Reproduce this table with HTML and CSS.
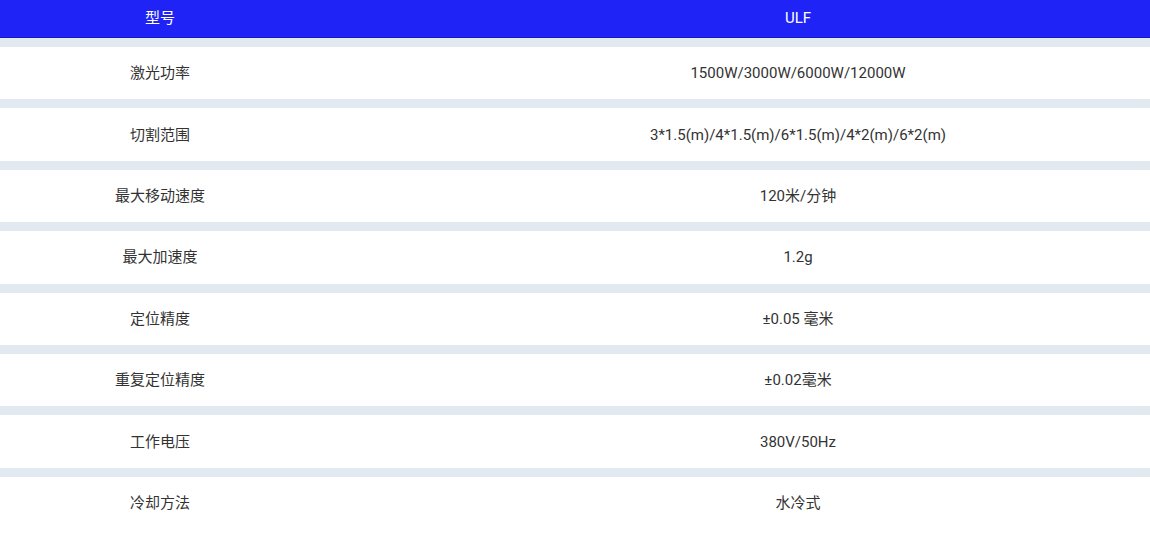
FILE: index.html
```html
<!DOCTYPE html>
<html lang="zh">
<head>
<meta charset="utf-8">
<link rel="stylesheet" href="styles.css">
</head>
<body>
<div class="spec">
  <div class="row head">
    <div class="c1">型号</div>
    <div class="c2">ULF</div>
  </div>
  <div class="row"><div class="c1">激光功率</div><div class="c2">1500W/3000W/6000W/12000W</div></div>
  <div class="row"><div class="c1">切割范围</div><div class="c2">3*1.5(m)/4*1.5(m)/6*1.5(m)/4*2(m)/6*2(m)</div></div>
  <div class="row"><div class="c1">最大移动速度</div><div class="c2">120米/分钟</div></div>
  <div class="row"><div class="c1">最大加速度</div><div class="c2">1.2g</div></div>
  <div class="row"><div class="c1">定位精度</div><div class="c2">±0.05 毫米</div></div>
  <div class="row"><div class="c1">重复定位精度</div><div class="c2">±0.02毫米</div></div>
  <div class="row"><div class="c1">工作电压</div><div class="c2">380V/50Hz</div></div>
  <div class="row"><div class="c1">冷却方法</div><div class="c2">水冷式</div></div>
</div>
</body>
</html>
```

FILE: styles.css
```css
html, body {
  margin: 0;
  padding: 0;
  background: #ffffff;
}
body {
  font-family: Roboto, "Noto Sans CJK SC", sans-serif;
  font-size: 15px;
  line-height: 20px;
  color: #333333;
  overflow: hidden;
}
.spec {
  display: flex;
  flex-direction: column;
}
.row {
  display: grid;
  grid-template-columns: 320px 1fr;
  align-items: center;
  height: 52.4px;
  border-top: 9px solid #e2e9f0;
  background: #ffffff;
}
.row.head {
  height: 37px;
  border-top: 0;
  border-bottom: 1px solid #1418c8;
  background: #1f23f5;
  color: #ffffff;
}
.row.head > div {
  padding-bottom: 2px;
}
.c1 {
  text-align: center;
}
.c2 {
  text-align: center;
  padding-left: 126px;
}
```
